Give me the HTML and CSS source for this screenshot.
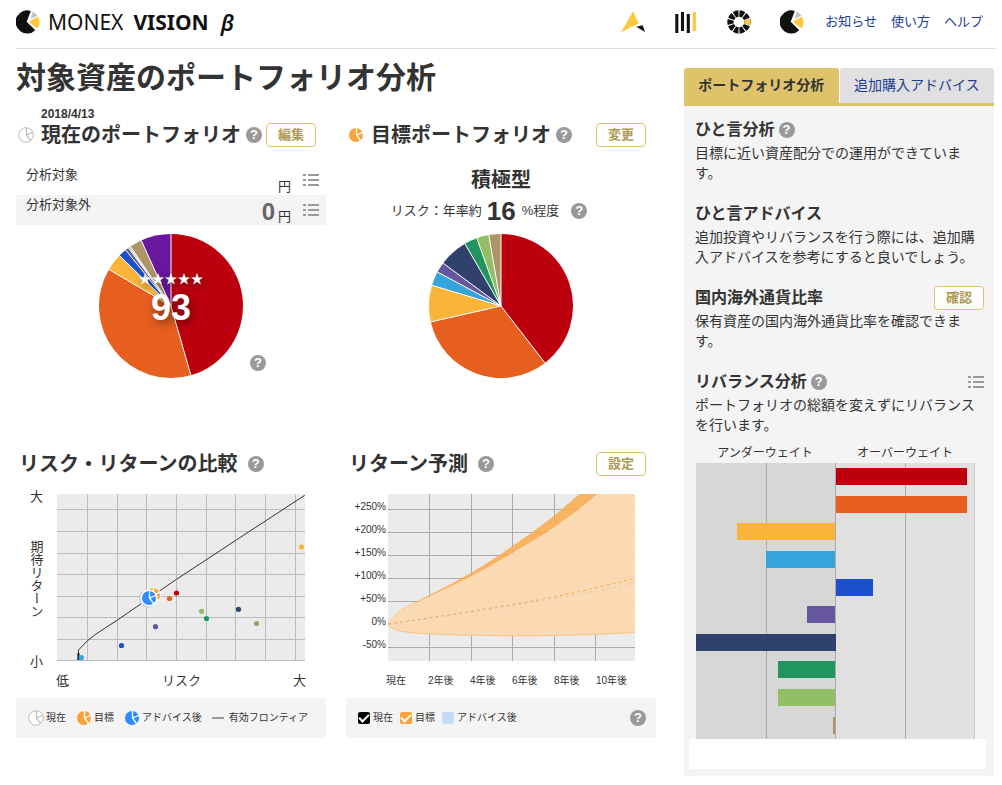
FILE: index.html
```html
<!DOCTYPE html>
<html lang="ja">
<head>
  <meta charset="UTF-8">
  <meta name="viewport" content="width=device-width, initial-scale=1.0">
  <title>MONEX VISION β</title>
  <link rel="stylesheet" href="styles.css">
</head>
<body>
  <!-- 共通アイコン -->
  <svg class="sprite" aria-hidden="true">
    <symbol id="logo-pie" viewBox="0 0 24 24">
      <path d="M14.8 .9 L10.7 11.8 L19.3 20.2 A11.6 11.6 0 1 1 14.8 .9z" fill="#111"/>
      <path d="M17 1.3 L21.6 5.400 L14.600 9z" fill="#c4c4c4"/>
      <path d="M12.8 11.8 L22 6.6 A11.6 11.6 0 0 1 21.3 18.6z" fill="#ffc83c"/>
    </symbol>
    <symbol id="list" viewBox="0 0 16 12">
      <path d="M0 1h3M0 6h3M0 11h3M5 1H16M5 6H16M5 11H16" stroke="#999" stroke-width="2"/>
    </symbol>
    <symbol id="pie-fill" viewBox="0 0 16 16">
      <circle cx="8" cy="8" r="7" fill="currentColor"/>
      <path d="M8.5 .5 V8 L12.8 14 M8.5 8 L15.5 5.2" fill="none" stroke="#fff" stroke-width="1.3"/>
    </symbol>
    <symbol id="pie-line" viewBox="0 0 16 16">
      <circle cx="8" cy="8" r="7.3" fill="#fff" stroke="#bbb"/>
      <path d="M8.5 .7 V8 L12.8 13.8 M8.5 8 L15 5.2" fill="none" stroke="#bbb" stroke-width="1.2"/>
    </symbol>
  </svg>

  <header class="header">
    <a class="logo" href="#">
      <svg class="icon-lg"><use href="#logo-pie"/></svg>
      <span class="logo-thin">MONEX</span>
      <span class="logo-bold">VISION</span>
      <span class="logo-beta">β</span>
    </a>
    <nav class="nav-icons">
      <a href="#" aria-label="アドバイス">
        <svg class="icon-lg" viewBox="0 0 24 24">
          <path d="M12 1.3 L0 22.5 L17.7 13.2z" fill="#ffc83c"/>
          <path d="M15.3 16.7 L21.7 15.3 L24 22z" fill="#111"/>
        </svg>
      </a>
      <a href="#" aria-label="資産推移">
        <svg class="icon-lg" viewBox="0 0 24 24">
          <path d="M2.8 4v19M8.5 2v19M14.3 4v19" stroke="#111" stroke-width="3.1"/>
          <path d="M20.3 2v19" stroke="#ffc83c" stroke-width="3.1"/>
        </svg>
      </a>
      <a href="#" aria-label="資産構成">
        <svg class="icon-lg" viewBox="0 0 24 24">
          <circle cx="12" cy="12" r="8.5" fill="none" stroke="#111" stroke-width="6.4" pathLength="100" stroke-dasharray="8.2 1.8" stroke-dashoffset="4.1"/>
          <path d="M12 12 m5.3 -1.6 L23.2 8.8 A11.7 11.7 0 0 1 23.2 15.2 L17.300 13.6z" fill="#ffc83c"/>
        </svg>
      </a>
      <a href="#" aria-label="ポートフォリオ">
        <svg class="icon-lg"><use href="#logo-pie"/></svg>
      </a>
    </nav>
    <nav class="nav-links">
      <a href="#">お知らせ</a>
      <a href="#">使い方</a>
      <a href="#">ヘルプ</a>
    </nav>
  </header>

  <div class="container">
    <main class="main">
      <h1>対象資産のポートフォリオ分析</h1>

      <div class="panels">
        <section class="panel portfolio">
          <p class="date">2018/4/13</p>
          <div class="panel-head">
            <svg class="icon"><use href="#pie-line"/></svg>
            <h2>現在のポートフォリオ</h2>
            <button class="help" type="button">?</button>
            <button class="btn" type="button">編集</button>
          </div>
          <div class="summary">
            <div class="summary-row">
              <span class="summary-label">分析対象</span>
              <span class="yen">円</span>
              <button class="list-btn" type="button" aria-label="一覧"><svg><use href="#list"/></svg></button>
            </div>
            <div class="summary-row gray">
              <span class="summary-label">分析対象外</span>
              <b>0</b>
              <span class="yen">円</span>
              <button class="list-btn" type="button" aria-label="一覧"><svg><use href="#list"/></svg></button>
            </div>
          </div>
          <div class="pie">
            <svg id="pieCurrent" viewBox="-73 -73 146 146"></svg>
            <div class="score">
              <span class="stars">★★★★★</span>
              <strong>93</strong>
            </div>
            <button class="help pie-help" type="button">?</button>
          </div>
        </section>

        <section class="panel portfolio">
          <p class="date"></p>
          <div class="panel-head">
            <svg class="icon orange"><use href="#pie-fill"/></svg>
            <h2>目標ポートフォリオ</h2>
            <button class="help" type="button">?</button>
            <button class="btn" type="button">変更</button>
          </div>
          <div class="summary target">
            <h3>積極型</h3>
            <p>リスク：年率約 <b>16</b> %程度 <button class="help" type="button">?</button></p>
          </div>
          <div class="pie">
            <svg id="pieTarget" viewBox="-73 -73 146 146"></svg>
          </div>
        </section>

        <section class="panel">
          <div class="panel-head chart-head">
            <h2>リスク・リターンの比較</h2>
            <button class="help" type="button">?</button>
          </div>
          <svg class="chart" viewBox="0 0 310 200">
            <rect x="41" y="4" width="248" height="167" fill="#ebebeb"/>
            <path class="grid" d="M71.5 4v167M101.5 4v167M130.5 4v167M160.5 4v167M190.5 4v167M219.5 4v167M249.5 4v167M279.5 4v167M41 19.5h248M41 41.5h248M41 63.5h248M41 84.5h248M41 106.5h248M41 127.5h248M41 149.5h248M41 170.5h248"/>
            <path d="M288.7 5.3 L219.5 50.5 L160.5 89.3 L101.5 130 L80 144 L71.5 150.7 L62.5 160 L62 170" fill="none" stroke="#333"/>
            <path d="M62.5 163v7" stroke="#222" stroke-width="2"/>
            <circle cx="285.5" cy="57" r="2.6" fill="#fbb43a"/>
            <circle cx="160.5" cy="103" r="2.6" fill="#bd000e"/>
            <circle cx="153.5" cy="108.5" r="2.6" fill="#e65f1e"/>
            <circle cx="185.5" cy="121.3" r="2.6" fill="#92bf65"/>
            <circle cx="190.5" cy="128.5" r="2.6" fill="#20965e"/>
            <circle cx="222.5" cy="119.3" r="2.6" fill="#30426c"/>
            <circle cx="240.5" cy="133.5" r="2.6" fill="#ae9568"/>
            <circle cx="139.5" cy="136.7" r="2.6" fill="#66569f"/>
            <circle cx="105.5" cy="155.5" r="2.6" fill="#1b4fcb"/>
            <circle cx="65.3" cy="167.7" r="2.6" fill="#34a4da"/>
            <circle cx="137" cy="105" r="8" fill="#fff" opacity=".8"/>
            <svg class="orange" x="129" y="97" width="16" height="16"><use href="#pie-fill"/></svg>
            <circle cx="132" cy="108.5" r="9" fill="#ccc"/>
            <circle cx="133" cy="108" r="8.5" fill="#fff"/>
            <svg class="blue" x="125" y="100" width="16" height="16"><use href="#pie-fill"/></svg>
            <g class="axis">
              <text x="14" y="11">大</text>
              <text x="14" y="176">小</text>
              <text class="vertical" x="20" y="50">期待リターン</text>
              <text x="40" y="195">低</text>
              <text x="146" y="195">リスク</text>
              <text x="277" y="195">大</text>
            </g>
          </svg>
          <div class="legend risk-legend">
            <span><svg class="icon"><use href="#pie-line"/></svg>現在</span>
            <span><svg class="icon orange"><use href="#pie-fill"/></svg>目標</span>
            <span><svg class="icon blue"><use href="#pie-fill"/></svg>アドバイス後</span>
            <span><i class="dash"></i>有効フロンティア</span>
          </div>
        </section>

        <section class="panel">
          <div class="panel-head chart-head">
            <h2>リターン予測</h2>
            <button class="help" type="button">?</button>
            <button class="btn" type="button">設定</button>
          </div>
          <svg class="chart" viewBox="0 0 310 200">
            <rect x="42" y="4" width="247" height="167" fill="#ebebeb"/>
            <path class="grid dark" d="M83.5 4v167M125.5 4v167M166.5 4v167M208.5 4v167M249.5 4v167M42 19.5h247M42 42.5h247M42 65.5h247M42 88.5h247M42 111.5h247M42 134.5h247M42 157.5h247"/>
            <path d="M42 134 C45 124 58 118 83.5 106.5 C98 99.5 112 93 125.5 86 C140 78.5 153 71 166.5 63 C181 54.5 195 46 208.5 37 C223 27 238 16 251 4 H289 V142.5 C230 146 160 147 83.5 144 C58 142.5 45 141 42 134z" fill="#fcd8af" opacity=".95"/>
            <path d="M42 134 C45 124 58 117.5 83.5 105 C98 98 112 90 125.5 82.5 C140 74 153 65.5 166.5 56 C181 46 195 36 208.5 25.5 L233.5 4 H251 C238 16 223 27 208.5 37 C195 46 181 54.5 166.5 63 C153 71 140 78.5 125.5 86 C112 93 98 99.5 83.5 106.5 C58 118 45 124 42 134z" fill="#fbac50" opacity=".88"/>
            <path d="M42 134 C45 141 58 142.5 83.5 144 C160 147 230 146 289 142.5" fill="none" stroke="#f9c387"/>
            <path d="M42 134 C85 128.5 125 122 166.5 115.500 S250 102 289 92.5" fill="none" stroke="#d5cec4" stroke-dasharray="3 3"/>
            <path d="M42 134 C85 128 125 121.500 166.5 114.5 S250 98.500 289 88" fill="none" stroke="#f9ac55" stroke-dasharray="3 3"/>
            <g class="axis small">
              <text class="end" x="40" y="20">+250%</text>
              <text class="end" x="40" y="43">+200%</text>
              <text class="end" x="40" y="66">+150%</text>
              <text class="end" x="40" y="89">+100%</text>
              <text class="end" x="40" y="112">+50%</text>
              <text class="end" x="40" y="135">0%</text>
              <text class="end" x="40" y="158">-50%</text>
              <text x="40" y="194">現在</text>
              <text x="82" y="194">2年後</text>
              <text x="124" y="194">4年後</text>
              <text x="166" y="194">6年後</text>
              <text x="208" y="194">8年後</text>
              <text x="250" y="194">10年後</text>
            </g>
          </svg>
          <div class="legend">
            <label><input type="checkbox" class="now" checked>現在</label>
            <label><input type="checkbox" class="goal" checked>目標</label>
            <label><input type="checkbox" class="advice">アドバイス後</label>
            <button class="help" type="button">?</button>
          </div>
        </section>
      </div>
    </main>

    <aside class="sidebar">
      <nav class="tabs">
        <a class="tab active" href="#">ポートフォリオ分析</a>
        <a class="tab" href="#">追加購入アドバイス</a>
      </nav>
      <div class="side-body">
        <section class="note">
          <div class="note-head">
            <h3>ひと言分析</h3>
            <button class="help" type="button">?</button>
          </div>
          <p>目標に近い資産配分での運用ができています。</p>
        </section>
        <section class="note">
          <div class="note-head">
            <h3>ひと言アドバイス</h3>
          </div>
          <p>追加投資やリバランスを行う際には、追加購入アドバイスを参考にすると良いでしょう。</p>
        </section>
        <section class="note">
          <div class="note-head">
            <h3>国内海外通貨比率</h3>
            <button class="btn" type="button">確認</button>
          </div>
          <p>保有資産の国内海外通貨比率を確認できます。</p>
        </section>
        <section class="note">
          <div class="note-head">
            <h3>リバランス分析</h3>
            <button class="help" type="button">?</button>
            <button class="list-btn" type="button" aria-label="一覧"><svg><use href="#list"/></svg></button>
          </div>
          <p>ポートフォリオの総額を変えずにリバランスを行います。</p>
        </section>
        <div class="weight-labels">
          <span>アンダーウェイト</span>
          <span>オーバーウェイト</span>
        </div>
        <div class="weights" id="weights"></div>
      </div>
      <div class="side-foot"></div>
    </aside>
  </div>

  <script>
    const RADIUS = 72;

    // [color, end angle]
    const current = [
      ['#bd000e', 164], ['#e65f1e', 300.5], ['#fbb43a', 314.4], ['#1b4fcb', 321],
      ['#66569f', 323.7], ['#20965e', 324.7], ['#92bf65', 325.7], ['#ae9568', 335.6], ['#6a17a0', 360]
    ];
    const target = [
      ['#bd000e', 142.3], ['#e65f1e', 257.2], ['#fbb43a', 286.7], ['#34a4da', 298.1],
      ['#66569f', 306.5], ['#30426c', 329.9], ['#20965e', 340.4], ['#92bf65', 350.2], ['#ae9568', 360]
    ];

    function point(deg) {
      const rad = deg * Math.PI / 180;
      return `${RADIUS * Math.sin(rad)} ${-RADIUS * Math.cos(rad)}`;
    }

    function drawPie(id, slices) {
      let start = 0;
      let html = '';
      slices.forEach(([color, end]) => {
        const large = end - start > 180 ? 1 : 0;
        html += `<path d="M0 0 L${point(start)} A${RADIUS} ${RADIUS} 0 ${large} 1 ${point(end)}z" fill="${color}"/>`;
        start = end;
      });
      slices.forEach(([, end]) => {
        html += `<path d="M0 0 L${point(end)}" stroke="#fff"/>`;
      });
      document.getElementById(id).innerHTML = html;
    }

    drawPie('pieCurrent', current);
    drawPie('pieTarget', target);

    // マイナスはアンダーウェイト
    const weights = [
      ['#bd000e', 47.3], ['#e65f1e', 47], ['#fbb43a', -35.3], ['#34a4da', -24.8], ['#1b4fcb', 13.5],
      ['#66569f', -10.1], ['#30426c', -50], ['#20965e', -20.5], ['#92bf65', -20.5], ['#ae9568', -0.8]
    ];
    document.getElementById('weights').innerHTML = weights.map(([color, v]) =>
      `<div class="weight-row"><div class="bar" style="width:${Math.abs(v)}%;margin-left:${v < 0 ? 50 + v : 50}%;background:${color}"></div></div>`
    ).join('');
  </script>
</body>
</html>
```
FILE: styles.css
```css
* {
  box-sizing: border-box;
}

body {
  margin: 0;
  background: #fff;
  color: #333;
  font-family: "Liberation Sans", "Noto Sans CJK JP", sans-serif;
  font-size: 13px;
  line-height: 20px;
}

h1, h2, h3, p {
  margin: 0;
}

a {
  color: #1d3c94;
  text-decoration: none;
}

button {
  font-family: inherit;
  padding: 0;
  cursor: pointer;
}

.sprite {
  display: none;
}

.icon {
  width: 16px;
  height: 16px;
  flex: none;
}

.icon-lg {
  display: block;
  width: 24px;
  height: 24px;
}

.orange {
  color: #fba33a;
}

.blue {
  color: #2d8cff;
}

/* header */
.header {
  display: flex;
  align-items: center;
  height: 49px;
  margin: 0 6px 0 16px;
  padding-bottom: 4px;
  border-bottom: 1px solid #ddd;
}

.logo {
  display: flex;
  align-items: center;
  color: #111;
  font-family: "Noto Sans", sans-serif;
  font-size: 21px;
}

.logo-thin {
  margin-left: 8px;
}

.logo-bold {
  margin-left: 10px;
  font-weight: bold;
}

.logo-beta {
  margin-left: 12px;
  font-size: 22px;
  font-weight: 600;
  font-style: italic;
}

.nav-icons {
  display: flex;
  gap: 29px;
  margin-left: auto;
}

.nav-links {
  display: flex;
  gap: 14px;
  margin: 0 13px 0 21px;
}

/* layout */
.container {
  display: grid;
  grid-template-columns: minmax(0, 1fr) 310px;
  gap: 28px;
  align-items: start;
  padding: 0 8px 8px 16px;
}

h1 {
  margin-top: 9px;
  font-size: 30px;
  line-height: 40px;
}

.panels {
  display: grid;
  grid-template-columns: 1fr 1fr;
  gap: 73px 20px;
  margin-top: 9px;
}

.date {
  height: 15px;
  margin-left: 25px;
  font-size: 12px;
  line-height: 14px;
  font-weight: bold;
}

.panel-head {
  display: flex;
  align-items: center;
  height: 26px;
  padding: 0 10px 0 2px;
}

.panel-head h2 {
  margin: 0 5px 0 7px;
  font-size: 20px;
  line-height: 26px;
}

.chart-head {
  height: 24px;
  padding-left: 3px;
}

.chart-head h2 {
  margin: 0 10px 0 0;
}

.btn {
  width: 50px;
  height: 24px;
  margin-left: auto;
  background: #fff;
  border: 1px solid #dfc36a;
  border-radius: 4px;
  color: #ae9a55;
  font-size: 13px;
  line-height: 20px;
  font-weight: bold;
}

.help {
  flex: none;
  width: 16px;
  height: 16px;
  background: #999;
  border: 0;
  border-radius: 50%;
  color: #fff;
  font-size: 13px;
  line-height: 16px;
  font-weight: bold;
}

.list-btn {
  width: 16px;
  height: 12px;
  background: none;
  border: 0;
}

.list-btn svg {
  display: block;
  width: 16px;
  height: 12px;
}

/* summary */
.summary {
  height: 60px;
  margin: 17px 0 8px;
}

.summary-row {
  display: flex;
  align-items: flex-end;
  height: 30px;
  padding: 0 7px 0 10px;
}

.summary-row.gray {
  background: #f4f4f4;
}

.summary-label {
  align-self: flex-start;
  margin-right: auto;
}

.summary-row b {
  margin-right: 3px;
  color: #666;
  font-size: 24px;
  line-height: 26px;
}

.yen {
  line-height: 16px;
}

.summary-row .list-btn {
  margin: 0 0 9px 12px;
}

.target {
  text-align: center;
}

.target h3 {
  font-size: 20px;
  line-height: 30px;
}

.target p {
  display: flex;
  align-items: center;
  justify-content: center;
  line-height: 32px;
}

.target b {
  margin: 0 6px 0 5px;
  font-size: 26px;
}

.target .help {
  margin: 0 24px 0 12px;
}

/* pie */
.pie {
  position: relative;
  width: 146px;
  margin: 0 auto;
}

.pie svg {
  display: block;
}

.score {
  position: absolute;
  inset: 37px 0 0;
  text-align: center;
  color: #fff;
  text-shadow: 2px 3px 8px rgba(0, 0, 0, 0.5);
}

.stars {
  display: block;
  font-size: 13px;
  line-height: 18px;
}

.score strong {
  display: block;
  font-size: 36px;
  line-height: 40px;
}

.pie-help {
  position: absolute;
  left: 152px;
  top: 122px;
}

/* charts */
.chart {
  display: block;
  width: 100%;
  margin-top: 14px;
}

.grid {
  stroke: #bbb;
}

.grid.dark {
  stroke: #aaa;
}

.axis {
  fill: #333;
  font-size: 13px;
}

.axis.small {
  font-size: 10px;
}

.end {
  text-anchor: end;
}

.vertical {
  writing-mode: vertical-rl;
}

.legend {
  display: flex;
  align-items: center;
  gap: 7px;
  height: 40px;
  margin-top: 8px;
  padding: 0 10px 0 12px;
  background: #f4f4f4;
  font-size: 10px;
}

.legend span,
.legend label {
  display: flex;
  align-items: center;
  gap: 2px;
  white-space: nowrap;
}

.risk-legend {
  gap: 10px;
}

.dash {
  width: 12px;
  height: 2px;
  margin-right: 3px;
  background: #999;
}

.legend .help {
  margin-left: auto;
}

.legend input {
  appearance: none;
  display: grid;
  place-items: center;
  width: 12px;
  height: 12px;
  margin: 0 1px 0 0;
  border-radius: 2px;
}

.now {
  background: #000;
}

.goal {
  background: #fba33a;
}

.advice {
  background: #c6dcf5;
}

.legend input:checked::before {
  content: "";
  width: 8px;
  height: 4px;
  margin-bottom: 2px;
  border: solid #fff;
  border-width: 0 0 2px 2px;
  transform: rotate(-45deg);
}

/* sidebar */
.sidebar {
  margin-top: 19px;
  background: #f4f4f4;
}

.tabs {
  display: flex;
  gap: 1px;
  background: #fff;
  border-bottom: 3px solid #dfc36a;
}

.tab {
  flex: 1;
  height: 35px;
  background: #e0e0e0;
  border-radius: 3px 3px 0 0;
  font-size: 14px;
  line-height: 34px;
  text-align: center;
}

.tab.active {
  background: #dfc36a;
  color: #333;
  font-weight: bold;
}

.side-body {
  padding: 12px 10px 0 11px;
}

.note {
  margin-bottom: 19px;
}

.note:last-of-type {
  margin-bottom: 8px;
}

.note-head {
  display: flex;
  align-items: center;
  height: 24px;
  margin-bottom: 1px;
}

.note-head h3 {
  font-size: 16px;
  line-height: 24px;
}

.note-head .help {
  margin-left: 4px;
}

.note-head .list-btn {
  margin-left: auto;
}

.note p {
  font-size: 14px;
}

.weight-labels {
  display: flex;
  width: 280px;
  font-size: 12px;
}

.weight-labels span {
  flex: 1;
  text-align: center;
}

.weights {
  display: flex;
  flex-direction: column;
  height: 276px;
  margin: 0 9px 0 1px;
  background:
    linear-gradient(#aaa, #aaa) 25% 0 / 1px 100% no-repeat,
    linear-gradient(#aaa, #aaa) 50% 0 / 1px 100% no-repeat,
    linear-gradient(#aaa, #aaa) 75% 0 / 1px 100% no-repeat,
    linear-gradient(#ccc, #ccc) 100% 0 / 1px 100% no-repeat,
    linear-gradient(90deg, #d7d7d7 50%, #e0e0e0 50%);
}

.weight-row {
  display: flex;
  flex: 1;
  align-items: center;
}

.bar {
  height: 17px;
}

.side-foot {
  height: 37px;
  background: #fff;
  border: solid #f4f4f4;
  border-width: 0 8px 7px 5px;
}
```
